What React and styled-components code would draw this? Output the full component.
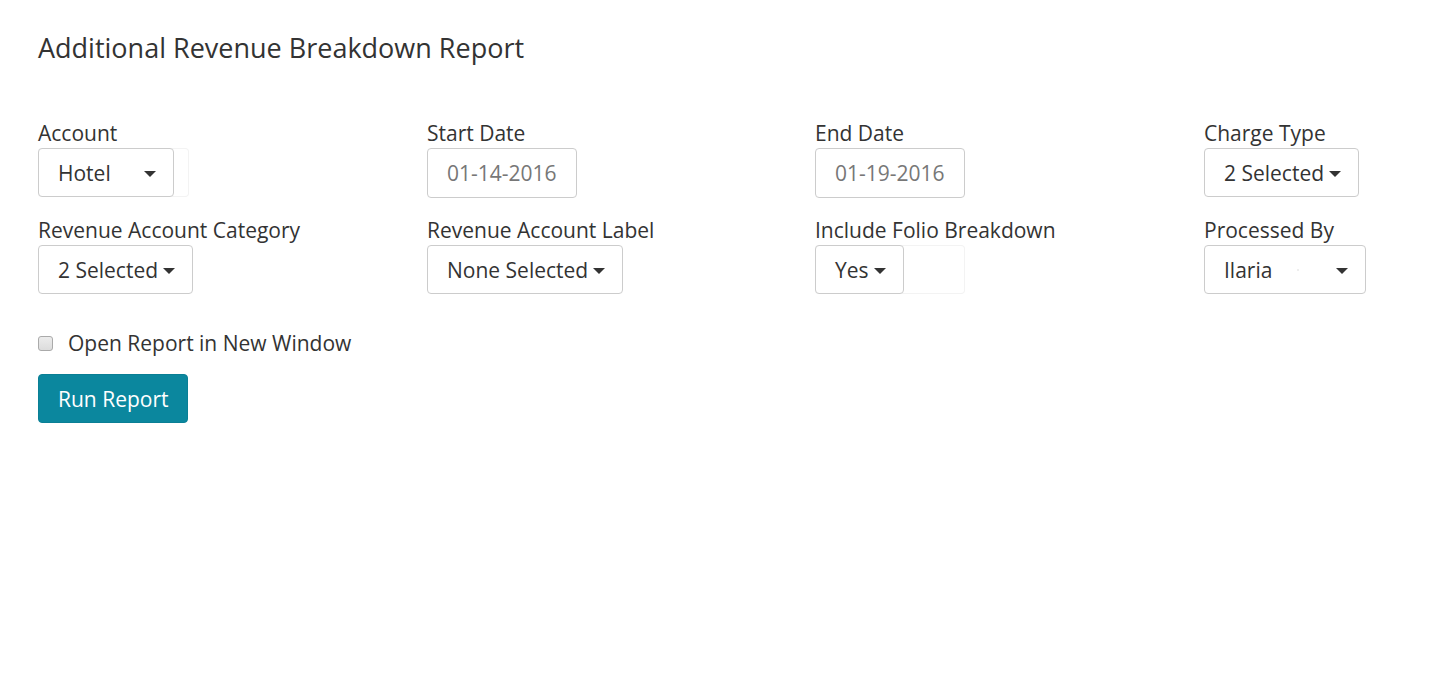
import styled, { createGlobalStyle } from "styled-components";

const GlobalStyle = createGlobalStyle`
  html, body {
    margin: 0;
    padding: 0;
    background: #fff;
    font-family: "Open Sans", "Liberation Sans", sans-serif;
    color: #333;
    overflow-x: hidden;
  }
`;

const Page = styled.div`
  padding: 26px 38px 0 38px;
`;

const Title = styled.h1`
  margin: 0;
  font-size: 27px;
  font-weight: 400;
  line-height: 44px;
  color: #333;
`;

const Grid = styled.div`
  margin-top: 48px;
  display: grid;
  grid-template-columns: 389px 388px 389px auto;
  row-gap: 17px;
`;

const Field = styled.div`
  display: flex;
  flex-direction: column;
  align-items: flex-start;
`;

const Label = styled.label`
  font-size: 21px;
  line-height: 30px;
  color: #333;
`;

const Wrap = styled.div`
  display: inline-flex;
  width: ${(p) => p.$ghost || "auto"};
  height: 49px;
  border-radius: 4px;
  box-shadow: ${(p) => (p.$ghost ? "inset 0 0 0 1px #f3f3f3" : "none")};
`;

const Select = styled.button`
  box-sizing: border-box;
  height: 49px;
  width: ${(p) => p.$w || "auto"};
  display: flex;
  align-items: center;
  justify-content: ${(p) => (p.$spread ? "space-between" : "flex-start")};
  gap: 5px;
  padding: 0 17px 0 19px;
  background: #fff;
  border: 1px solid #ccc;
  border-radius: 4px;
  font-family: inherit;
  font-size: 21px;
  color: #333;
  cursor: pointer;
`;

const Caret = styled.span`
  display: inline-block;
  width: 0;
  height: 0;
  border-top: 6px solid #333;
  border-left: 6px solid transparent;
  border-right: 6px solid transparent;
  margin-top: 2px;
`;

const DateInput = styled.input`
  box-sizing: border-box;
  width: 150px;
  height: 50px;
  padding: 0 19px;
  border: 1px solid #ccc;
  border-radius: 4px;
  font-family: inherit;
  font-size: 21px;
  color: #777;
  background: #fff;
`;

const CheckRow = styled.label`
  margin-top: 34px;
  display: flex;
  align-items: center;
  gap: 15px;
  font-size: 21px;
  line-height: 30px;
  color: #333;
`;

const Box = styled.span`
  width: 15px;
  height: 15px;
  box-sizing: border-box;
  border: 1px solid #aaa;
  border-radius: 3px;
  background: linear-gradient(#ececec, #dcdcdc);
`;

const RunButton = styled.button`
  margin-top: 16px;
  height: 49px;
  padding: 0 19px;
  background: #0b879e;
  border: 1px solid #0a7f95;
  border-radius: 4px;
  color: #fff;
  font-family: inherit;
  font-size: 21px;
  cursor: pointer;
`;

const Dot = styled.span`
  width: 2px;
  height: 2px;
  background: #eee;
  margin-left: auto;
  margin-right: 32px;
`;

const SelectField = ({ label, value, w, ghost, spread, dot }) => (
  <Field>
    <Label>{label}</Label>
    <Wrap $ghost={ghost}>
      <Select $w={w} $spread={spread}>
        {value}
        {dot && <Dot />}
        <Caret />
      </Select>
    </Wrap>
  </Field>
);

const DateField = ({ label, value }) => (
  <Field>
    <Label>{label}</Label>
    <DateInput defaultValue={value} />
  </Field>
);

export default function App() {
  return (
    <>
      <GlobalStyle />
      <Page>
        <Title>Additional Revenue Breakdown Report</Title>
        <Grid>
          <SelectField label="Account" value="Hotel" w="136px" ghost="151px" spread />
          <DateField label="Start Date" value="01-14-2016" />
          <DateField label="End Date" value="01-19-2016" />
          <SelectField label="Charge Type" value="2 Selected" />
          <SelectField label="Revenue Account Category" value="2 Selected" />
          <SelectField label="Revenue Account Label" value="None Selected" />
          <SelectField label="Include Folio Breakdown" value="Yes" ghost="150px" />
          <SelectField label="Processed By" value="Ilaria" w="162px" spread dot />
        </Grid>
        <CheckRow>
          <Box />
          Open Report in New Window
        </CheckRow>
        <RunButton>Run Report</RunButton>
      </Page>
    </>
  );
}
